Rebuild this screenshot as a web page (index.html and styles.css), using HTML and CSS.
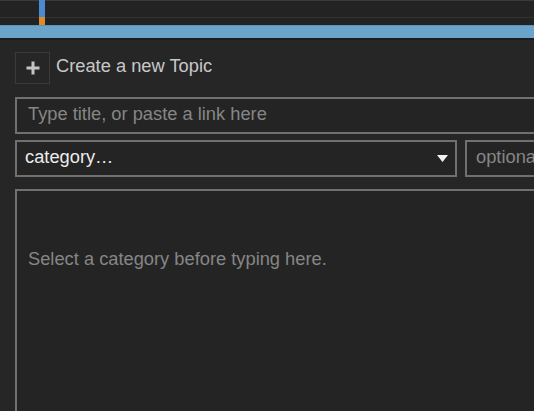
FILE: index.html
```html
<!DOCTYPE html>
<html>
<head>
<meta charset="utf-8">
<link rel="stylesheet" href="styles.css">
</head>
<body>
<div class="header">
  <div class="hdr-top"></div>
  <div class="hdr-mid"></div>
  <div class="hdr-low"></div>
  <div class="hdr-band"></div>
  <div class="hdr-shadow"></div>
  <div class="indicator"><div class="ind-blue"></div><div class="ind-orange"></div></div>
</div>
<div class="composer">
  <div class="create-row">
    <div class="plus-btn">
      <svg width="16" height="16" viewBox="0 0 16 16"><path d="M8 1.5v13M1.5 8h13" stroke="#c4c4c4" stroke-width="3"/></svg>
    </div>
    <span class="create-label">Create a new Topic</span>
  </div>
  <div class="field title-field"><span class="ph">Type title, or paste a link here</span></div>
  <div class="cat-row">
    <div class="field cat-field">
      <span class="cat-text">category…</span>
      <svg class="caret" width="11" height="7" viewBox="0 0 11 7"><path d="M0 0h11L5.5 7z" fill="#f2f2f2"/></svg>
    </div>
    <div class="field opt-field"><span class="ph">optional tags</span></div>
  </div>
  <div class="field editor"><span class="ph">Select a category before typing here.</span></div>
</div>
</body>
</html>
```
FILE: styles.css
```css
html, body {
  margin: 0;
  padding: 0;
  background: #262626;
  overflow: hidden;
  width: 534px;
  height: 411px;
  font-family: "Liberation Sans", Arial, sans-serif;
}
.header {
  position: relative;
  display: flex;
  flex-direction: column;
}
.hdr-top { height: 1px; background: #3a3a3a; }
.hdr-mid { height: 16px; background: #232323; }
.hdr-low { height: 8px; background: #222222; border-top: 1px solid #323232; box-sizing: border-box; }
.hdr-band { height: 13px; background: #6aa4ca; border-top: 1px solid #5d92b6; box-sizing: border-box; }
.hdr-shadow { height: 2px; background: #1c1c1c; }
.indicator {
  position: absolute;
  left: 39px;
  top: 0;
  width: 6px;
  display: flex;
  flex-direction: column;
}
.ind-blue { height: 17px; background: #4a8bd1; }
.ind-orange { height: 8px; background: #e0882a; }
.composer {
  padding: 12px 0 0 15px;
  display: flex;
  flex-direction: column;
}
.create-row {
  display: flex;
  align-items: center;
  gap: 6px;
}
.plus-btn {
  width: 35px;
  height: 32px;
  box-sizing: border-box;
  border: 1px solid #3a3a3a;
  display: flex;
  align-items: center;
  justify-content: center;
}
.create-label {
  font-size: 18.3px;
  color: #c8c8c8;
  margin-top: -4px;
}
.field {
  box-sizing: border-box;
  border: 2px solid #707070;
  background: #242424;
  display: flex;
  align-items: center;
  font-size: 18.3px;
  flex-shrink: 0;
}
.ph { color: #868686; white-space: nowrap; margin-top: -3px; }
.title-field {
  margin-top: 13px;
  width: 560px;
  height: 37px;
  padding-left: 11px;
}
.cat-row {
  display: flex;
  gap: 8px;
  margin-top: 6px;
  width: 600px;
}
.cat-field {
  width: 442px;
  height: 37px;
  padding: 0 7px 0 8px;
  justify-content: space-between;
}
.cat-text { color: #ececec; margin-top: -4px; }
.opt-field {
  width: 150px;
  height: 37px;
  padding-left: 9px;
}
.editor {
  margin-top: 12px;
  width: 560px;
  height: 260px;
  align-items: flex-start;
  padding: 60px 0 0 11px;
}
```
